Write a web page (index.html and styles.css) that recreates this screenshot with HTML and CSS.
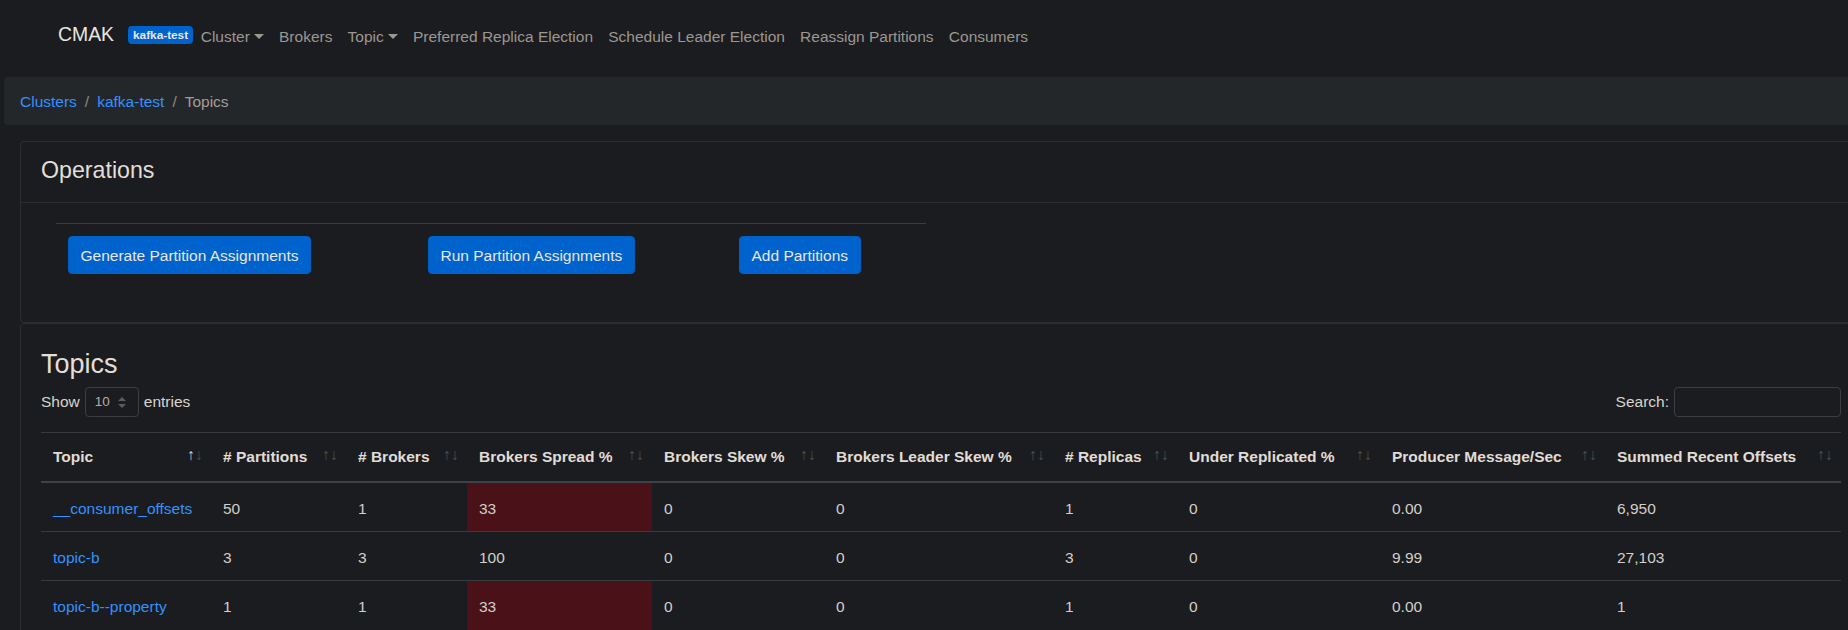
FILE: index.html
```html
<!DOCTYPE html>
<html lang="en">
<head>
<meta charset="utf-8">
<title>CMAK - Topics</title>
<link rel="stylesheet" href="styles.css">
</head>
<body>
<nav class="navbar">
  <a class="brand" href="#">CMAK</a>
  <span class="badge">kafka-test</span>
  <ul class="nav">
    <li><a class="nav-link dropdown" href="#">Cluster</a></li>
    <li><a class="nav-link" href="#">Brokers</a></li>
    <li><a class="nav-link dropdown" href="#">Topic</a></li>
    <li><a class="nav-link" href="#">Preferred Replica Election</a></li>
    <li><a class="nav-link" href="#">Schedule Leader Election</a></li>
    <li><a class="nav-link" href="#">Reassign Partitions</a></li>
    <li><a class="nav-link" href="#">Consumers</a></li>
  </ul>
</nav>

<ol class="breadcrumb">
  <li><a href="#">Clusters</a></li>
  <li class="sep">/</li>
  <li><a href="#">kafka-test</a></li>
  <li class="sep">/</li>
  <li class="active">Topics</li>
</ol>

<main class="content">
  <section class="card">
    <header class="card-header"><h4 class="card-title">Operations</h4></header>
    <div class="card-body ops-body">
      <hr class="ops-rule">
      <div class="ops-buttons">
        <div class="ops-cell"><a class="btn" href="#">Generate Partition Assignments</a></div>
        <div class="ops-cell"><a class="btn" href="#">Run Partition Assignments</a></div>
        <div class="ops-cell"><a class="btn" href="#">Add Partitions</a></div>
      </div>
    </div>
  </section>

  <section class="card">
    <div class="card-body">
      <h3 class="topics-title">Topics</h3>
      <div class="dt-controls">
        <label class="dt-length">Show
          <span class="select-box">10
            <svg class="select-arrows" width="8" height="11" viewBox="0 0 8 11"><path d="M4 0 L8 4 L0 4 Z M0 7 L8 7 L4 11 Z" fill="#595d60"/></svg>
          </span>
          entries</label>
        <label class="dt-search">Search: <span class="search-box"></span></label>
      </div>
      <table class="data-table">
        <colgroup>
          <col class="w-topic"><col class="w-part"><col class="w-brok"><col class="w-spread"><col class="w-skew">
          <col class="w-lskew"><col class="w-repl"><col class="w-under"><col class="w-prod"><col class="w-sum">
        </colgroup>
        <thead>
          <tr>
            <th class="sorting sorting-asc">Topic</th>
            <th class="sorting"># Partitions</th>
            <th class="sorting"># Brokers</th>
            <th class="sorting">Brokers Spread %</th>
            <th class="sorting">Brokers Skew %</th>
            <th class="sorting">Brokers Leader Skew %</th>
            <th class="sorting"># Replicas</th>
            <th class="sorting">Under Replicated %</th>
            <th class="sorting">Producer Message/Sec</th>
            <th class="sorting">Summed Recent Offsets</th>
          </tr>
        </thead>
        <tbody>
          <tr>
            <td><a href="#">__consumer_offsets</a></td><td>50</td><td>1</td><td class="danger">33</td><td>0</td>
            <td>0</td><td>1</td><td>0</td><td>0.00</td><td>6,950</td>
          </tr>
          <tr>
            <td><a href="#">topic-b</a></td><td>3</td><td>3</td><td>100</td><td>0</td>
            <td>0</td><td>3</td><td>0</td><td>9.99</td><td>27,103</td>
          </tr>
          <tr>
            <td><a href="#">topic-b--property</a></td><td>1</td><td>1</td><td class="danger">33</td><td>0</td>
            <td>0</td><td>1</td><td>0</td><td>0.00</td><td>1</td>
          </tr>
        </tbody>
      </table>
    </div>
  </section>
</main>
</body>
</html>
```

FILE: styles.css
```css
* { box-sizing: border-box; }

html, body {
  margin: 0;
  padding: 0;
}

body {
  background: #1b1c1f;
  color: #d3cfc9;
  font-family: "Liberation Sans", Arial, sans-serif;
  font-size: 15.5px;
  line-height: 24px;
  overflow: hidden;
}

a { text-decoration: none; }

/* ---------- navbar ---------- */
.navbar {
  display: flex;
  align-items: flex-start;
  height: 77px;
  padding: 17px 0 0 58px;
}

.brand {
  margin-top: 2px;
  margin-right: 14px;
  font-size: 19.4px;
  line-height: 30px;
  color: #e8e6e3;
}

.badge {
  margin-top: 9px;
  padding: 3px 5px;
  border-radius: 4px;
  background: #0062cc;
  color: #e8e6e3;
  font-size: 11.8px;
  font-weight: 700;
  line-height: 12px;
}

.nav {
  display: flex;
  margin: 0;
  padding: 0;
  list-style: none;
}

.nav-link {
  display: block;
  padding: 8px 7.6px;
  color: #9b9791;
}

.dropdown::after {
  content: "";
  display: inline-block;
  margin-left: 4px;
  vertical-align: 3px;
  border-top: 5px solid #9b9791;
  border-left: 5px solid transparent;
  border-right: 5px solid transparent;
}

/* ---------- breadcrumb ---------- */
.breadcrumb {
  display: flex;
  margin: 0 -20px 16px 4px;
  padding: 13px 16px 11px;
  height: 48px;
  list-style: none;
  background: #232729;
  border-radius: 4px;
}

.breadcrumb a { color: #3391ff; }

.breadcrumb .sep {
  padding: 0 8px;
  color: #8f8a83;
}

.breadcrumb .active { color: #a39e97; }

/* ---------- cards ---------- */
.content {
  width: 1841px;
  margin-left: 20px;
}

.card {
  border: 1px solid #2b2d30;
  border-radius: 4px;
}

.card-header {
  padding: 14px 20px 10px;
  border-bottom: 1px solid #2b2d30;
}

.card-title {
  margin: 0 0 8px;
  font-size: 23.2px;
  line-height: 28px;
  font-weight: 400;
  color: #e2ded8;
}

.card-body { padding: 20px; }

.ops-rule {
  width: 870px;
  margin: 0 0 0 15px;
  border: 0;
  border-top: 1px solid #3a3d40;
}

.ops-buttons {
  display: grid;
  grid-template-columns: 360px 311px auto;
  margin: 12px 0 28px 27px;
}

.ops-cell { display: flex; }

.btn {
  display: inline-block;
  height: 38px;
  padding: 7px 11.5px 5px;
  border: 1px solid #0060c4;
  border-radius: 4px;
  background: #0063cd;
  color: #e8e6e3;
  white-space: nowrap;
}

/* ---------- topics ---------- */
.topics-title {
  margin: 0 0 7px;
  padding-top: 4px;
  font-size: 27px;
  line-height: 32px;
  font-weight: 400;
  color: #e2ded8;
}

.dt-controls {
  display: flex;
  justify-content: space-between;
  align-items: center;
  width: 1800px;
  height: 30px;
  margin-bottom: 15px;
}

.dt-length, .dt-search {
  display: flex;
  align-items: center;
  gap: 5px;
  color: #d8d4ce;
}

.select-box {
  display: flex;
  align-items: center;
  justify-content: space-between;
  width: 54px;
  height: 30px;
  padding: 0 12px 0 9px;
  border: 1px solid #3b3e42;
  border-radius: 4px;
  font-size: 13.5px;
  color: #b5aea4;
}

.search-box {
  display: block;
  width: 167px;
  height: 30px;
  border: 1px solid #3b3e42;
  border-radius: 4px;
}

.data-table {
  width: 1800px;
  table-layout: fixed;
  border-collapse: collapse;
}

.w-topic  { width: 170px; }
.w-part   { width: 135px; }
.w-brok   { width: 121px; }
.w-spread { width: 185px; }
.w-skew   { width: 172px; }
.w-lskew  { width: 229px; }
.w-repl   { width: 124px; }
.w-under  { width: 203px; }
.w-prod   { width: 225px; }
.w-sum    { width: 236px; }

.data-table th,
.data-table td {
  border-top: 1px solid #383b3e;
  text-align: left;
  white-space: nowrap;
  overflow: hidden;
}

.data-table th {
  position: relative;
  padding: 12px 30px 12px 12px;
  border-bottom: 2px solid #3d4245;
  font-weight: 700;
  color: #e0dcd6;
  vertical-align: bottom;
}

.data-table td {
  height: 49px;
  padding: 14px 12px 10px;
  vertical-align: top;
}

.data-table td a { color: #3391ff; }

.data-table td.danger { background: #4b1118; }

.sorting::before,
.sorting::after {
  position: absolute;
  bottom: 14px;
  font-weight: 400;
  line-height: 24px;
  color: #4f5356;
}

.sorting::before { content: "\2191"; right: 16px; }
.sorting::after  { content: "\2193"; right: 8px; }

.sorting-asc::before { color: #d6d2cc; }
```
